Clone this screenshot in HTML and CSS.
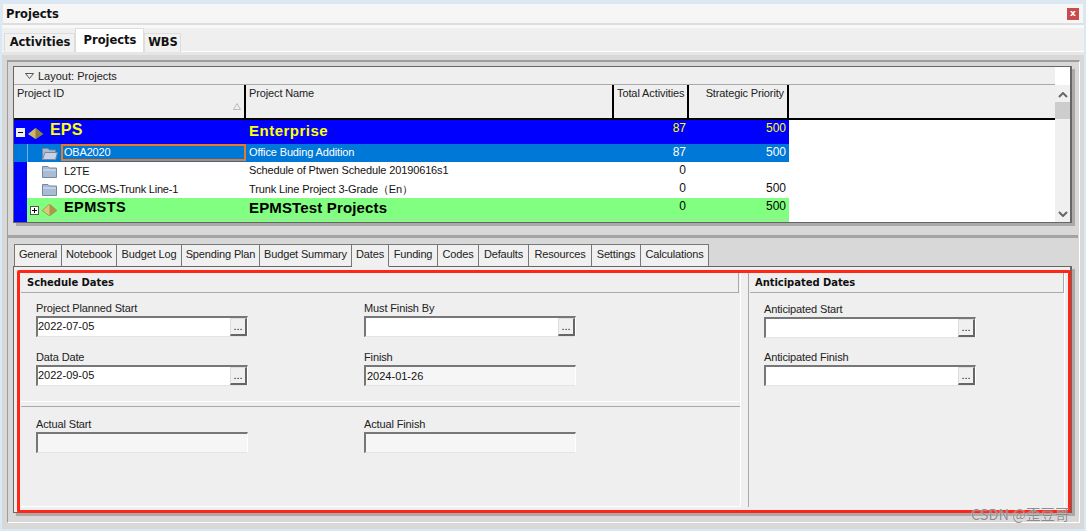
FILE: index.html
```html
<!DOCTYPE html>
<html lang="en">
<head>
<meta charset="utf-8">
<title>Projects</title>
<link rel="stylesheet" href="styles.css">
</head>
<body>
<div class="app">
  <header class="titlebar">
    <span class="title">Projects</span>
    <span class="close">x</span>
  </header>
  <nav class="main-tabs">
    <span class="main-tab tab-activities">Activities</span>
    <span class="main-tab active">Projects</span>
    <span class="main-tab tab-wbs">WBS</span>
  </nav>
  <main class="workspace">
    <div class="frame">
      <section class="table-box">
        <div class="table-main">
          <div class="layout-bar">
            <svg class="chev" width="9" height="6" viewBox="0 0 9 6"><path d="M0.5 0.5H8.5L4.5 5.5Z" fill="none" stroke="#555"/></svg>
            <span>Layout: Projects</span>
          </div>
          <div class="row head">
            <div class="hcell first">Project ID
              <svg class="sort" width="8" height="7" viewBox="0 0 8 7"><path d="M0.5 6.5H7.5L4 0.5Z" fill="none" stroke="#bbb"/></svg>
            </div>
            <div class="hcell">Project Name</div>
            <div class="hcell tight">Total Activities</div>
            <div class="hcell right">Strategic Priority</div>
            <div class="hfill"></div>
          </div>
          <div class="row eps">
            <div class="cell idcell">
              <svg class="box" width="9" height="9" viewBox="0 0 9 9"><rect x="0" y="0" width="9" height="9" fill="#eee"/><path d="M2 4.5H7" stroke="#000"/></svg>
              <svg class="pyr" width="15" height="11" viewBox="0 0 15 11"><path d="M7.5 0L15 6L7.5 11L0 6Z" fill="#cbb86a"/><path d="M7.5 0L15 6L7.5 11Z" fill="#8f7f3a"/></svg>
              <b class="big">EPS</b>
            </div>
            <div class="cell"><b class="big2 ent">Enterprise</b></div>
            <div class="cell num">87</div>
            <div class="cell num">500</div>
          </div>
          <div class="row project selected">
            <div class="cell idcell">
              <span class="stripe"></span>
              <svg class="folder" width="16" height="13" viewBox="0 0 16 13"><path d="M0.5 12.5V1.5H6L7.5 3H13.5V12.5Z" fill="#a8bcd6" stroke="#7688a0"/><path d="M0.5 12.5L3 5.5H15.5L13.5 12.5Z" fill="#c5d3e6" stroke="#7688a0"/></svg>
              <span class="focus">OBA2020</span>
            </div>
            <div class="cell">Office Buding Addition</div>
            <div class="cell num">87</div>
            <div class="cell num">500</div>
          </div>
          <div class="row project">
            <div class="cell idcell">
              <span class="stripe"></span>
              <svg class="folder" width="16" height="13" viewBox="0 0 16 13"><path d="M0.5 12.5V1.5H6L7.5 3H14.5V12.5Z" fill="#a8bcd6" stroke="#7688a0"/><path d="M1 5H14" stroke="#dbe4f0"/></svg>
              <span class="id">L2TE</span>
            </div>
            <div class="cell">Schedule of Ptwen Schedule 20190616s1</div>
            <div class="cell num">0</div>
            <div class="cell num"></div>
          </div>
          <div class="row project">
            <div class="cell idcell">
              <span class="stripe"></span>
              <svg class="folder" width="16" height="13" viewBox="0 0 16 13"><path d="M0.5 12.5V1.5H6L7.5 3H14.5V12.5Z" fill="#a8bcd6" stroke="#7688a0"/><path d="M1 5H14" stroke="#dbe4f0"/></svg>
              <span class="id">DOCG-MS-Trunk Line-1</span>
            </div>
            <div class="cell">Trunk Line Project 3-Grade（En）</div>
            <div class="cell num">0</div>
            <div class="cell num">500</div>
          </div>
          <div class="row epm">
            <div class="cell idcell">
              <span class="stripe"></span>
              <svg class="box plus" width="9" height="9" viewBox="0 0 9 9"><rect x="0.5" y="0.5" width="8" height="8" fill="#fff" stroke="#555"/><path d="M2 4.5H7M4.5 2V7" stroke="#000"/></svg>
              <svg class="pyr" width="15" height="12" viewBox="0 0 15 12"><path d="M7.5 0L15 6.5L7.5 12L0 6.5Z" fill="#d8c878" stroke="#8f7f3a" stroke-width=".6"/><path d="M7.5 0L15 6.5L7.5 12Z" fill="#a89848"/></svg>
              <b class="big3">EPMSTS</b>
            </div>
            <div class="cell"><b class="big2">EPMSTest Projects</b></div>
            <div class="cell num">0</div>
            <div class="cell num">500</div>
          </div>
        </div>
        <aside class="scrollbar">
          <svg width="10" height="6" viewBox="0 0 10 6"><path d="M1 5L5 1L9 5" fill="none" stroke="#666" stroke-width="2"/></svg>
          <span class="thumb"></span>
          <svg class="down" width="10" height="6" viewBox="0 0 10 6"><path d="M1 1L5 5L9 1" fill="none" stroke="#666" stroke-width="2"/></svg>
        </aside>
      </section>
      <div class="splitter"></div>
      <nav class="detail-tabs">
        <span class="dtab">General</span>
        <span class="dtab">Notebook</span>
        <span class="dtab">Budget Log</span>
        <span class="dtab">Spending Plan</span>
        <span class="dtab">Budget Summary</span>
        <span class="dtab active">Dates</span>
        <span class="dtab">Funding</span>
        <span class="dtab">Codes</span>
        <span class="dtab">Defaults</span>
        <span class="dtab">Resources</span>
        <span class="dtab">Settings</span>
        <span class="dtab">Calculations</span>
      </nav>
      <section class="details">
        <div class="left">
          <div class="pane-top">
            <h2 class="sec-head">Schedule Dates</h2>
            <div class="fields">
              <div class="field">
                <label>Project Planned Start</label>
                <div class="input"><span>2022-07-05</span><i class="dots">...</i></div>
              </div>
              <div class="field">
                <label>Must Finish By</label>
                <div class="input"><span></span><i class="dots">...</i></div>
              </div>
              <div class="field">
                <label>Data Date</label>
                <div class="input"><span>2022-09-05</span><i class="dots">...</i></div>
              </div>
              <div class="field">
                <label>Finish</label>
                <div class="input ro"><span>2024-01-26</span></div>
              </div>
            </div>
          </div>
          <div class="pane-bottom">
            <div class="fields">
              <div class="field">
                <label>Actual Start</label>
                <div class="input ro"><span></span></div>
              </div>
              <div class="field">
                <label>Actual Finish</label>
                <div class="input ro"><span></span></div>
              </div>
            </div>
          </div>
        </div>
        <div class="rightpane">
          <h2 class="sec-head">Anticipated Dates</h2>
          <div class="field">
            <label>Anticipated Start</label>
            <div class="input"><span></span><i class="dots">...</i></div>
          </div>
          <div class="field">
            <label>Anticipated Finish</label>
            <div class="input"><span></span><i class="dots">...</i></div>
          </div>
        </div>
      </section>
    </div>
  </main>
  <div class="annotation"></div>
  <div class="watermark">CSDN @歪豆哥</div>
</div>
</body>
</html>
```

FILE: styles.css
```css
* { box-sizing: border-box; }
html, body { margin: 0; height: 531px; overflow: hidden; }
body { background: #d9e8f5; font: 11px "Liberation Sans", Arial, sans-serif; color: #111; }
.app { position: relative; width: 1086px; height: 531px; padding: 3px 2px 2px; display: flex; flex-direction: column; }

.titlebar { height: 22px; background: #f6f6f6; border: 1px solid #e4e4e4; border-bottom: 2px solid #dedede; display: flex; align-items: center; justify-content: space-between; padding: 1px 4px 0 3px; flex: none; }
.title { font: bold 11.5px "DejaVu Sans", sans-serif; color: #111; }
.close { width: 12px; height: 12px; background: #c84c4c; color: #fff; font: bold 9px/11px "DejaVu Sans", sans-serif; text-align: center; }

.main-tabs { height: 27px; flex: none; background: #efefef; border-top: 3px solid #f8f8f8; border-bottom: 1px solid #fff; display: grid; grid-template-columns: 71px 69px 37px; padding-left: 2px; align-items: end; }
.main-tab { height: 19px; border: 1px solid #ddd; border-bottom: 0; background: #f1f1f1; font: bold 11.5px/16px "DejaVu Sans", sans-serif; text-align: center; color: #111; text-indent: 1px; }
.main-tab.active { height: 24px; background: #fff; line-height: 23px; align-self: start; }

.workspace { flex: 1; background: #d8d8d8; border-top: 3px solid #e6e6e6; padding: 5px 4px 6px 5px; min-height: 0; }
.frame { height: 100%; border: 1px solid #9d9d9d; border-right-color: #fff; border-bottom-color: #fff; border-top-width: 2px; padding: 4px 6px 0 5px; display: flex; flex-direction: column; }

.table-box { height: 157px; flex: none; margin-right: 1px; border: 1px solid #666; border-right-width: 2px; background: #fff; box-shadow: 3px 3px 0 #aaa; display: flex; }
.table-main { flex: 1; min-width: 0; background: #fff; }
.layout-bar { height: 18px; background: #efefef; border-bottom: 1px solid #aaa; display: flex; align-items: center; padding-left: 11px; gap: 4px; color: #222; }
.row { display: grid; grid-template-columns: 232px 368px 75px 100px 1fr; }
.row.head { height: 35px; border-bottom: 2px solid #000; background: #efefef; }
.hcell { position: relative; padding: 2px 0 0 3px; border-right: 2px solid #000; color: #222; letter-spacing: -.13px; }
.hcell.tight { letter-spacing: -.1px; white-space: nowrap; }
.hcell.right { text-align: right; padding-right: 3px; }
.hfill { background: #efefef; }
.sort { position: absolute; right: 3px; bottom: 8px; }

.cell { display: flex; align-items: flex-start; padding: 2px 0 0 3px; white-space: nowrap; letter-spacing: -.13px; }
.num { justify-content: flex-end; padding: 1px 3px 0 0; letter-spacing: 0; font-size: 12px; }
.idcell { position: relative; padding: 0; }

.eps { height: 24px; }
.eps .cell { background: #0000ff; color: #ffff00; }
.eps .idcell { align-items: center; }
.eps .box { margin-left: 2px; flex: none; }
.eps .pyr { margin-left: 3px; margin-top: 2px; flex: none; }
.big { font-size: 16px; margin-left: 7px; margin-top: -5px; letter-spacing: .2px; }
.big2 { font-size: 15px; line-height: 17px; letter-spacing: .15px; }
.big2.ent { letter-spacing: .5px; }
.big3 { font-size: 14.5px; margin-left: 7px; margin-top: -6px; letter-spacing: .4px; }

.project { height: 18px; }
.project .cell { background: #fff; color: #111; }
.project .idcell { align-items: center; }
.stripe { width: 13px; height: 100%; background: #0000ff; flex: none; }
.folder { margin-left: 15px; flex: none; }
.id { margin-left: 6px; letter-spacing: -.2px; }
.selected .cell { background: #0078d7; color: #fff; }
.selected .stripe { background: #0078d7; border-right: 1px solid #6fb0e6; width: 14px; }
.selected .folder { margin-left: 14px; }
.focus { flex: 1; align-self: flex-start; height: 17px; margin-left: 3px; border: 2px solid #e87a26; padding-left: 1px; line-height: 12px; letter-spacing: -.2px; color: #fff; }

.epm { height: 24px; }
.epm .cell { background: #80ff80; color: #000; box-shadow: inset 0 -2px 0 #80ff80, inset 0 -3px 0 #b4d8b4; }
.epm .idcell { align-items: center; }
.epm .big2 { margin-top: -1px; }
.epm .box { margin-left: 3px; flex: none; }
.epm .pyr { margin-left: 3px; flex: none; }

.scrollbar { width: 15px; flex: none; background: #f0f0f0; margin-top: 18px; display: flex; flex-direction: column; align-items: center; padding-top: 7px; }
.scrollbar .thumb { width: 15px; height: 17px; background: #cdcdcd; margin-top: 4px; }
.scrollbar .down { margin-top: auto; margin-bottom: 5px; }

.splitter { flex: none; border-bottom: 3px solid #a4a4a4; margin: 12px -5px 0; height: 3px; box-shadow: 0 -4px 0 -3px #fff; }

.detail-tabs { height: 22px; margin-top: 6px; flex: none; display: grid; grid-template-columns: 48px 55px 65px 78px 92px 37px 49px 41px 50px 63px 49px 68px; justify-content: start; padding-left: 1px; }
.dtab { border: 1px solid #777; border-left: 0; background: #f0f0f0; text-align: center; line-height: 19px; color: #222; white-space: nowrap; letter-spacing: -.15px; }
.dtab:first-child { border-left: 1px solid #777; }
.dtab.active { border-bottom-color: #f0f0f0; position: relative; z-index: 1; height: 23px; }

.details { flex: 1; min-height: 0; margin: 0 1px 9px 0; border: 1px solid #666; border-right-width: 2px; background: #efefef; box-shadow: 3px 3px 0 #aaa; display: flex; padding: 5px 5px 5px 7px; }
.left { width: 720px; flex: none; display: flex; flex-direction: column; border-right: 1px solid #fff; border-bottom: 1px solid #fff; }
.pane-top { height: 130px; flex: none; border-bottom: 1px solid #fff; }
.pane-bottom { flex: 1; margin-top: 4px; border-top: 1px solid #aaa; padding: 10px 0 0 15px; }
.sec-head { margin: 0; height: 21px; border-bottom: 1px solid #aaa; border-right: 1px solid #aaa; font: bold 10px/21px "DejaVu Sans", sans-serif; padding-left: 5px; color: #111; letter-spacing: -.05px; }
.pane-top .sec-head { margin-right: 1px; padding-left: 6px; }
.fields { display: grid; grid-template-columns: 212px 212px; column-gap: 116px; row-gap: 13px; }
.pane-top .fields { padding: 8px 0 0 15px; }
.field label { display: block; height: 15px; line-height: 14px; color: #222; letter-spacing: -.13px; }
.input { width: 212px; height: 21px; background: #fff; border-style: solid; border-color: #777 #fff #e4e4e4 #777; border-width: 2px 1px 1px 2px; display: flex; justify-content: space-between; align-items: center; padding-bottom: 2px; }
.input.ro { background: #f6f6f6; padding-bottom: 0; }
.input.ro span { padding-left: 1px; }
.dots { width: 17px; height: 18px; align-self: flex-end; margin-bottom: -2px; background: #f0f0f0; border-style: solid; border-color: #ddd #666 #666 #ddd; border-width: 1px 2px 2px 1px; font-style: normal; text-align: center; line-height: 15px; }

.rightpane { flex: 1; margin-left: 7px; border-left: 1px solid #aaa; border-right: 1px solid #fff; }
.rightpane .sec-head { margin-left: 1px; margin-bottom: 9px; }
.rightpane .field { margin-left: 15px; margin-bottom: 12px; }

.annotation { position: absolute; left: 17px; top: 270px; width: 1054px; height: 243px; border: 3px solid #ff2618; border-radius: 2px; pointer-events: none; }
.watermark { position: absolute; left: 971px; top: 503px; font: 14.5px "Noto Sans CJK SC", sans-serif; color: rgba(110,110,110,.8); text-shadow: 0 0 1px #fff; white-space: nowrap; }
```
